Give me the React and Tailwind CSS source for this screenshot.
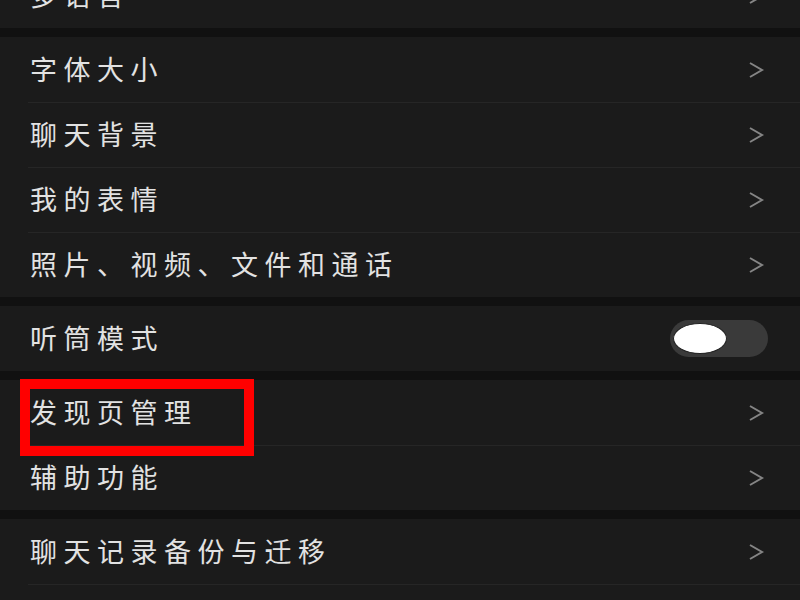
import React from "react";

const Chevron = () => (
  <svg width="16" height="18" viewBox="0 0 16 18" className="shrink-0">
    <path d="M2 2 L14 9 L2 16" fill="none" stroke="#858585" strokeWidth="2" strokeLinejoin="miter" />
  </svg>
);

const Row = ({ label, first, right }) => (
  <div className="relative h-[65px] flex items-center bg-[#1b1b1b]">
    {!first && <div className="absolute top-0 left-[28px] right-0 h-px bg-[#262626]" />}
    <span className="pl-[30px] -mt-[3px] text-[27px] leading-none tracking-[6.5px] text-[#e2e2e2] flex-1">{label}</span>
    <div className="pr-[36px] flex items-center">{right || <Chevron />}</div>
  </div>
);

const Toggle = () => (
  <div className="relative w-[98px] h-[37px] rounded-full bg-[#3a3a3a] -mr-[4px]">
    <div className="absolute left-[3px] top-[3px] w-[54px] h-[31px] rounded-[50%] bg-white border border-[#222]" />
  </div>
);

const Group = ({ children }) => <div className="flex flex-col">{children}</div>;

export default function App() {
  return (
    <div
      className="relative w-[800px] h-[600px] overflow-hidden bg-[#111111]"
      style={{ fontFamily: '"Noto Sans CJK SC", "Noto Sans", sans-serif' }}
    >
      <div className="flex flex-col gap-[9px] -mt-[37px]">
        <Group>
          <Row first label="多语言" />
        </Group>
        <Group>
          <Row first label="字体大小" />
          <Row label="聊天背景" />
          <Row label="我的表情" />
          <Row label="照片、视频、文件和通话" />
        </Group>
        <Group>
          <Row first label="听筒模式" right={<Toggle />} />
        </Group>
        <Group>
          <Row first label="发现页管理" />
          <Row label="辅助功能" />
        </Group>
        <Group>
          <Row first label="聊天记录备份与迁移" />
          <Row label="" />
        </Group>
      </div>
      <div className="absolute left-[20px] top-[379px] w-[234px] h-[77px] border-[10px] border-[#ff0000]" />
    </div>
  );
}
